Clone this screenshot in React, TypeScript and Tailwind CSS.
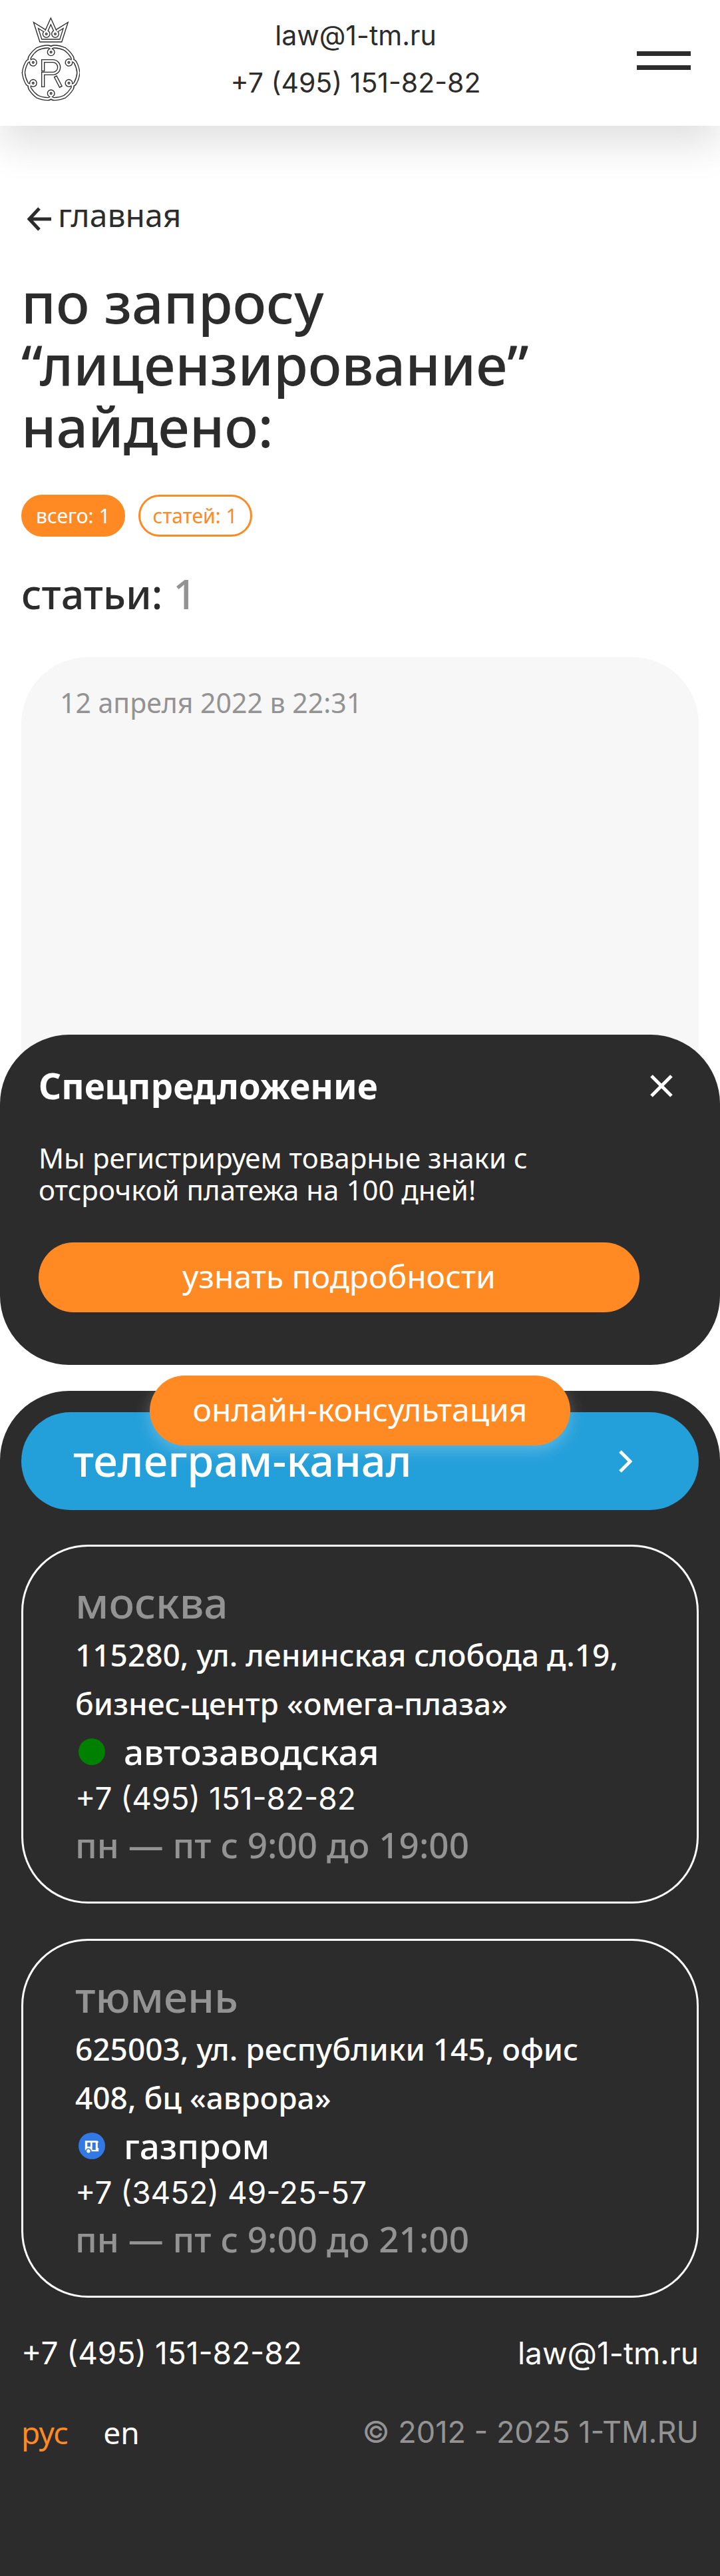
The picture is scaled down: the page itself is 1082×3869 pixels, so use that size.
import React from 'react';

const NOTO = "font-['Noto_Sans',sans-serif]";
const INTER = "font-['Inter',sans-serif]";

function LogoLines({ inset }: { inset: number }) {
  return (
    <>
      <path d="M178 118 L199 71 L220 118" />
      <path d="M172 114 L132 89 L154 158 H244 L266 89 L226 114" />
      <circle cx="179" cy="128" r="10" />
      <circle cx="219" cy="128" r="10" />
      {[0, 60, 120, 180, 240, 300].map((angle) => (
        <g key={angle} transform={`rotate(${angle} 200 303)`}>
          <path d="M136 196.600 A124 124 0 0 1 186 185 Q195 185 200 192 Q205 185 214 185 A124 124 0 0 1 264 196.600" />
          <circle cx="200" cy="210" r="10" />
        </g>
      ))}
      <path d={`M164 ${297 - inset} V250 H208 a28 28 0 0 1 0 56 H164 V${368 - inset}`} />
      <path d={`M${219 + inset / 2} ${318 + inset} L${245 - inset / 2} ${368 - inset}`} />
    </>
  );
}

function Logo() {
  return (
    <svg viewBox="66 50 264 384" className="h-32 w-[88px]" fill="none" strokeMiterlimit="10" aria-hidden="true">
      <g stroke="#2c2c2c" strokeWidth="16">
        <LogoLines inset={0} />
      </g>
      <g stroke="#ffffff" strokeWidth="8">
        <LogoLines inset={4} />
      </g>
    </svg>
  );
}

function BusIcon() {
  return (
    <svg viewBox="0 0 118 118" className="size-10" aria-hidden="true">
      <circle cx="59" cy="59" r="59" fill="#3279e6" />
      <path fill="#fff" d="M29 36h54l5 4v4H29z M29 44h10v18h14V44h8v34H29z M76 43h9v25h4v15H57v-6h19z" />
      <circle cx="44" cy="82" r="13" fill="#3279e6" />
      <circle cx="44" cy="82" r="8" fill="#fff" />
    </svg>
  );
}

type Office = {
  city: string;
  address: string;
  metro: string;
  icon: React.ReactNode;
  phone: string;
  tel: string;
  hours: string;
};

const offices: Office[] = [
  {
    city: 'москва',
    address: '115280, ул. ленинская слобода д.19, бизнес-центр «омега-плаза»',
    metro: 'автозаводская',
    icon: <span className="size-10 rounded-full bg-[#008000]" />,
    phone: '+7 (495) 151-82-82',
    tel: 'tel:+74951518282',
    hours: 'пн — пт с 9:00 до 19:00',
  },
  {
    city: 'тюмень',
    address: '625003, ул. республики 145, офис 408, бц «аврора»',
    metro: 'газпром',
    icon: <BusIcon />,
    phone: '+7 (3452) 49-25-57',
    tel: 'tel:+73452492557',
    hours: 'пн — пт с 9:00 до 21:00',
  },
];

function OfficeCard({ office }: { office: Office }) {
  return (
    <section className="rounded-[100px] border-3 border-white px-[78px] pt-[42px] pb-[51px]">
      <h3 className="text-[64px] leading-[84px] font-medium text-[#939393]">{office.city}</h3>
      <p className="pr-7 text-[46px] leading-[73px] font-medium">{office.address}</p>
      <div className="flex items-center gap-7 pl-[5px]">
        {office.icon}
        <span className="text-[53px] leading-[72px] font-medium">{office.metro}</span>
      </div>
      <a href={office.tel} className={`block text-[46px] leading-[69px] ${INTER}`}>
        {office.phone}
      </a>
      <p className="text-[53px] leading-[69px] font-medium text-[#939393]">{office.hours}</p>
    </section>
  );
}

function Header() {
  return (
    <header className="relative z-10 flex items-center bg-white pt-[18px] pr-11 pb-[29px] pl-8 shadow-[0_28px_56px_rgba(0,0,0,0.12)]">
      <a href="#home" aria-label="1-TM">
        <Logo />
      </a>
      <div className={`flex flex-1 flex-col items-center pr-2 text-[41px] leading-[71px] ${INTER}`}>
        <a href="mailto:law@1-tm.ru">law@1-tm.ru</a>
        <a href="tel:+74951518282">+7 (495) 151-82-82</a>
      </div>
      <button type="button" aria-label="Меню" className="flex w-[81px] flex-col gap-[14px] pt-1">
        <span className="h-[7px] bg-[#2c2c2c]" />
        <span className="h-[7px] bg-[#2c2c2c]" />
      </button>
    </header>
  );
}

function Offer() {
  return (
    <section className="w-full rounded-[104px] bg-[#2c2c2c] pt-[41px] pr-16 pb-[79px] pl-[58px] text-white">
      <div className="flex items-center justify-between">
        <h2 className="text-[53px] leading-[72px] font-bold">Спецпредложение</h2>
        <button type="button" aria-label="Закрыть" className="flex size-12 items-center justify-center">
          <svg viewBox="0 0 34 34" className="size-[34px]" stroke="currentColor" strokeWidth="5" aria-hidden="true">
            <path d="M2 2 L32 32 M32 2 L2 32" />
          </svg>
        </button>
      </div>
      <div className="mr-[57px]">
        <p className="mt-12 text-[42px] leading-[48px]">Мы регистрируем товарные знаки с отсрочкой платежа на 100 дней!</p>
        <button type="button" className="mt-[55px] h-[105px] w-full rounded-full bg-[#ff8a24] pb-1 text-[48px]">
          узнать подробности
        </button>
      </div>
    </section>
  );
}

export default function App() {
  return (
    <div className={`bg-white text-[#2c2c2c] ${NOTO}`}>
      <Header />
      <main className="relative px-8 pt-[101px] pb-[202px]">
        <a href="#home" className="flex items-center gap-[10px] pl-[9px] text-[48px] leading-[65px]">
          <svg viewBox="0 0 36 36" className="mt-3 size-9" fill="none" stroke="currentColor" strokeWidth="5" aria-hidden="true">
            <path d="M18 2 L3 18 L18 34 M3 18 H36" />
          </svg>
          главная
        </a>
        <h1 className="mt-[52px] text-[84px] leading-[93px] font-medium">по запросу “лицензирование” найдено:</h1>
        <div className="mt-[57px] flex gap-5 text-[30px] leading-[57px]">
          <button type="button" className="rounded-full border-3 border-[#ff8a24] bg-[#ff8a24] px-[19px] text-white">
            всего: 1
          </button>
          <button type="button" className="rounded-full border-3 border-[#ff8a24] px-[19px] text-[#ff8a24]">
            статей: 1
          </button>
        </div>
        <h2 className="mt-11 text-[61px] leading-[84px] font-medium">
          статьи: <span className="text-[#939393]">1</span>
        </h2>
        <article className="mt-[53px] min-h-[900px] rounded-[100px] bg-[#f7f7f7] px-[58px] pt-10">
          <time dateTime="2022-04-12T22:31" className="block text-[41px] leading-[56px] text-[#939393]">
            12 апреля 2022 в 22:31
          </time>
        </article>
        <div className="absolute inset-x-0 bottom-[-82px] z-10 flex flex-col items-center gap-4">
          <Offer />
          <button
            type="button"
            className="h-[105px] rounded-full bg-[#ff8a24] px-16 pb-1 text-[48px] text-white shadow-[0_8px_24px_rgba(255,255,255,0.25)]"
          >
            онлайн-консультация
          </button>
        </div>
      </main>
      <footer className="rounded-t-[104px] bg-[#2c2c2c] px-8 pt-8 pb-[184px] text-white">
        <a href="#telegram" className="flex h-[147px] items-center justify-between rounded-full bg-[#239fda] pr-[100px] pl-[78px]">
          <span className="pb-1 text-[65px] leading-[88px] font-medium">телеграм-канал</span>
          <svg viewBox="0 0 20 34" className="h-[34px] w-5" fill="none" stroke="currentColor" strokeWidth="5" aria-hidden="true">
            <path d="M2 2 L17 17 L2 32" />
          </svg>
        </a>
        <div className="mt-[52px] flex flex-col gap-[53px]">
          {offices.map((office) => (
            <OfficeCard key={office.city} office={office} />
          ))}
        </div>
        <div className={`mt-[51px] flex justify-between text-[46px] leading-[64px] ${INTER}`}>
          <a href="tel:+74951518282">+7 (495) 151-82-82</a>
          <a href="mailto:law@1-tm.ru">law@1-tm.ru</a>
        </div>
        <div className="mt-[55px] flex justify-between text-[46px] leading-[64px]">
          <nav className="flex gap-[52px]">
            <a href="#ru" className="text-[#ff8a24]">
              рус
            </a>
            <a href="#en">en</a>
          </nav>
          <p className={`text-[45px] text-[#939393] ${INTER}`}>© 2012 - 2025 1-TM.RU</p>
        </div>
      </footer>
    </div>
  );
}
